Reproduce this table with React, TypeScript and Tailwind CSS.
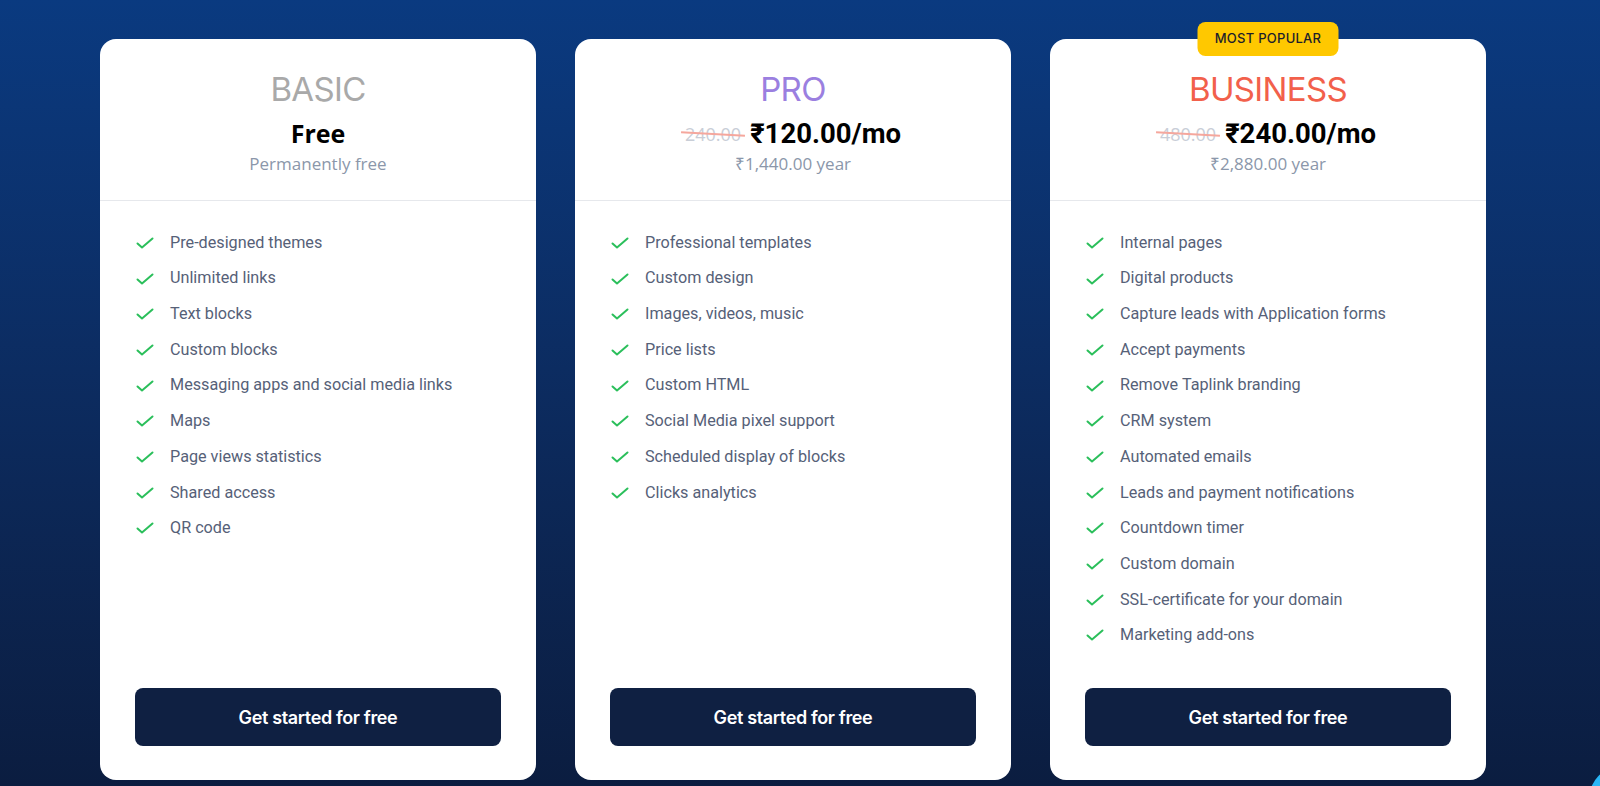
type Plan = {
  name: string;
  nameColor: string;
  price: string;
  oldPrice?: string;
  sub: string;
  popular?: boolean;
  features: string[];
};

const plans: Plan[] = [
  {
    name: 'BASIC',
    nameColor: 'text-[#a9a9a9]',
    price: 'Free',
    sub: 'Permanently free',
    features: [
      'Pre-designed themes',
      'Unlimited links',
      'Text blocks',
      'Custom blocks',
      'Messaging apps and social media links',
      'Maps',
      'Page views statistics',
      'Shared access',
      'QR code',
    ],
  },
  {
    name: 'PRO',
    nameColor: 'text-[#9b7fe0]',
    price: '₹120.00/mo',
    oldPrice: '240.00',
    sub: '₹1,440.00 year',
    features: [
      'Professional templates',
      'Custom design',
      'Images, videos, music',
      'Price lists',
      'Custom HTML',
      'Social Media pixel support',
      'Scheduled display of blocks',
      'Clicks analytics',
    ],
  },
  {
    name: 'BUSINESS',
    nameColor: 'text-[#f2604b]',
    price: '₹240.00/mo',
    oldPrice: '480.00',
    sub: '₹2,880.00 year',
    popular: true,
    features: [
      'Internal pages',
      'Digital products',
      'Capture leads with Application forms',
      'Accept payments',
      'Remove Taplink branding',
      'CRM system',
      'Automated emails',
      'Leads and payment notifications',
      'Countdown timer',
      'Custom domain',
      'SSL-certificate for your domain',
      'Marketing add-ons',
    ],
  },
];

function Tick() {
  return (
    <svg width="18" height="12" viewBox="0 0 18 12" fill="none" className="shrink-0">
      <path d="M1.5 6.5 L6 10.5 L16.5 1.5" stroke="#2bbf5b" strokeWidth="2" strokeLinecap="round" strokeLinejoin="round" />
    </svg>
  );
}

function PlanCard({ plan }: { plan: Plan }) {
  return (
    <div className="relative flex h-[741px] w-[436px] shrink-0 flex-col rounded-2xl bg-white">
      {plan.popular && (
        <div className="absolute -top-[17px] left-1/2 flex h-[34px] w-[141px] -translate-x-1/2 items-center justify-center rounded-lg bg-[#ffc800] font-['Inter',sans-serif] text-[13px] font-medium tracking-[0.02em] text-[#1d1d2b]">
          MOST POPULAR
        </div>
      )}

      {/* шапка тарифа */}
      <div className="flex h-[162px] shrink-0 flex-col items-center border-b border-[#e6e8ec] pt-[30px]">
        <div className={`font-['Inter',sans-serif] text-[33px] leading-[40px] font-normal tracking-[-0.02em] ${plan.nameColor}`}>
          {plan.name}
        </div>
        <div className="mt-[10px] flex h-[30px] items-center gap-[9px]">
          {plan.oldPrice && (
            <span className="relative font-['Open_Sans',sans-serif] text-[18px] text-[#c9ced7]">
              {plan.oldPrice}
              <span className="absolute top-[12px] -right-[4px] -left-[4px] h-[2px] rotate-[3deg] bg-[#f5a79d]" />
            </span>
          )}
          <span
            className={
              plan.oldPrice
                ? "font-['Roboto',sans-serif] text-[27.5px] font-bold text-black"
                : "font-['Open_Sans',sans-serif] text-[25px] font-bold text-black"
            }
          >
            {plan.price}
          </span>
        </div>
        <div className="mt-[2px] font-['Open_Sans',sans-serif] text-[17px] leading-[26px] text-[#8b97aa]">{plan.sub}</div>
      </div>

      <ul className="flex flex-col pt-[24px] pl-[36px]">
        {plan.features.map((f) => (
          <li key={f} className="flex h-[35.7px] items-center gap-[16px] font-['Roboto',sans-serif] text-[16.2px] text-[#566178]">
            <Tick />
            {f}
          </li>
        ))}
      </ul>

      <button className="mx-[35px] mt-auto mb-[34px] flex h-[58px] items-center justify-center rounded-lg bg-[#0f2042] font-['Inter',sans-serif] text-[18px] font-semibold tracking-[-0.02em] text-white">
        Get started for free
      </button>
    </div>
  );
}

export default function App() {
  return (
    <div className="relative h-[786px] w-full overflow-hidden bg-gradient-to-b from-[#0a3a80] to-[#0b1d40]">
      <div className="flex gap-[39px] pt-[39px] pl-[100px]">
        {plans.map((p) => (
          <PlanCard key={p.name} plan={p} />
        ))}
      </div>
      <div className="absolute top-[768px] left-[1590px] h-[56px] w-[56px] rounded-full bg-[#29b6f6]" />
    </div>
  );
}
